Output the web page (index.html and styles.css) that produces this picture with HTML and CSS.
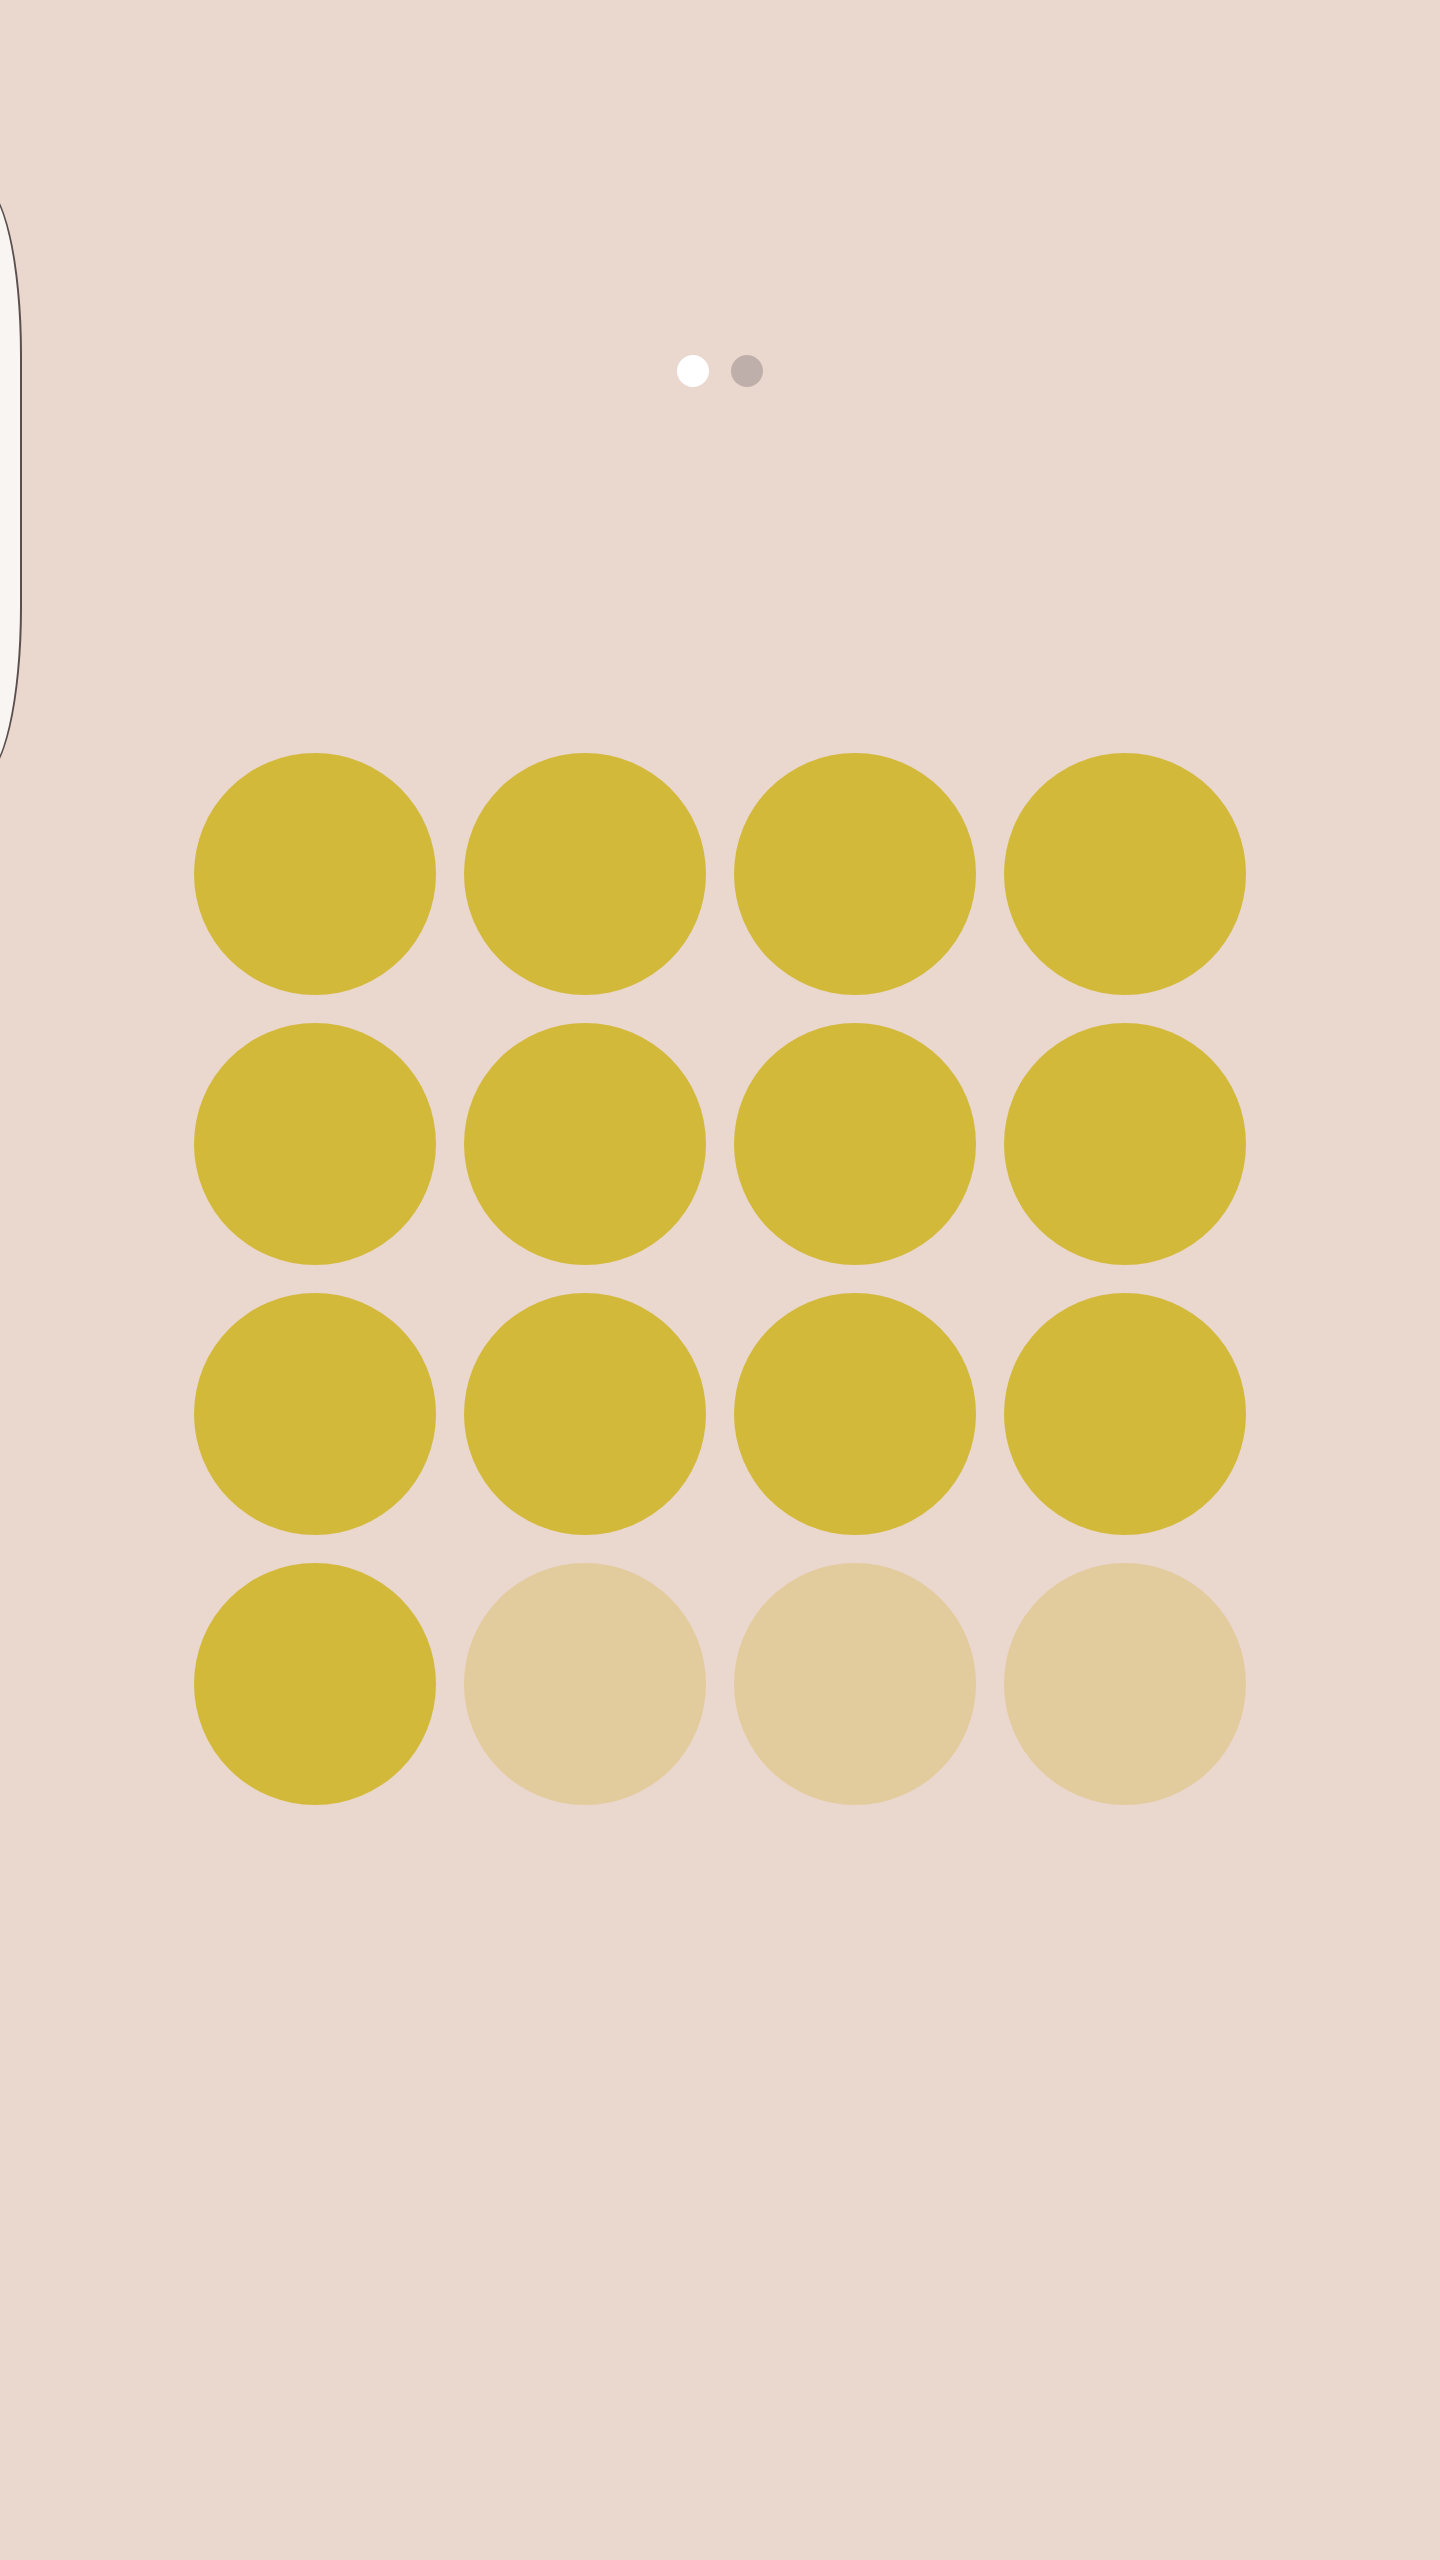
FILE: index.html
```html
<!DOCTYPE html>
<html>
<head>
<meta charset="utf-8">
<link rel="stylesheet" href="styles.css">
</head>
<body>
<div class="drawer"></div>
<main class="screen">
  <div class="pager">
    <span class="dot active"></span>
    <span class="dot"></span>
  </div>
  <div class="grid">
    <span class="cell on"></span><span class="cell on"></span><span class="cell on"></span><span class="cell on"></span>
    <span class="cell on"></span><span class="cell on"></span><span class="cell on"></span><span class="cell on"></span>
    <span class="cell on"></span><span class="cell on"></span><span class="cell on"></span><span class="cell on"></span>
    <span class="cell on"></span><span class="cell off"></span><span class="cell off"></span><span class="cell off"></span>
  </div>
</main>
</body>
</html>
```
FILE: styles.css
```css
html, body {
  margin: 0;
  padding: 0;
}
body {
  background: #ead7ce;
  width: 1440px;
  height: 2560px;
  overflow: hidden;
  position: relative;
  font-family: "Liberation Sans", sans-serif;
}
.drawer {
  position: absolute;
  left: -58px;
  top: 185px;
  width: 76px;
  height: 588px;
  background: #f9f5f2;
  border: 2px solid #5a4f4d;
  border-radius: 40px / 170px;
}
.screen {
  display: flex;
  flex-direction: column;
  align-items: center;
  padding-top: 355px;
}
.pager {
  display: flex;
  gap: 22px;
}
.dot {
  width: 32px;
  height: 32px;
  border-radius: 50%;
  background: #bfafaa;
}
.dot.active {
  background: #ffffff;
}
.grid {
  margin-top: 366px;
  display: grid;
  grid-template-columns: repeat(4, 242px);
  grid-auto-rows: 242px;
  gap: 28px;
}
.cell {
  border-radius: 50%;
}
.cell.on {
  background: #d3b93a;
}
.cell.off {
  background: #e2cb9c;
}
```
